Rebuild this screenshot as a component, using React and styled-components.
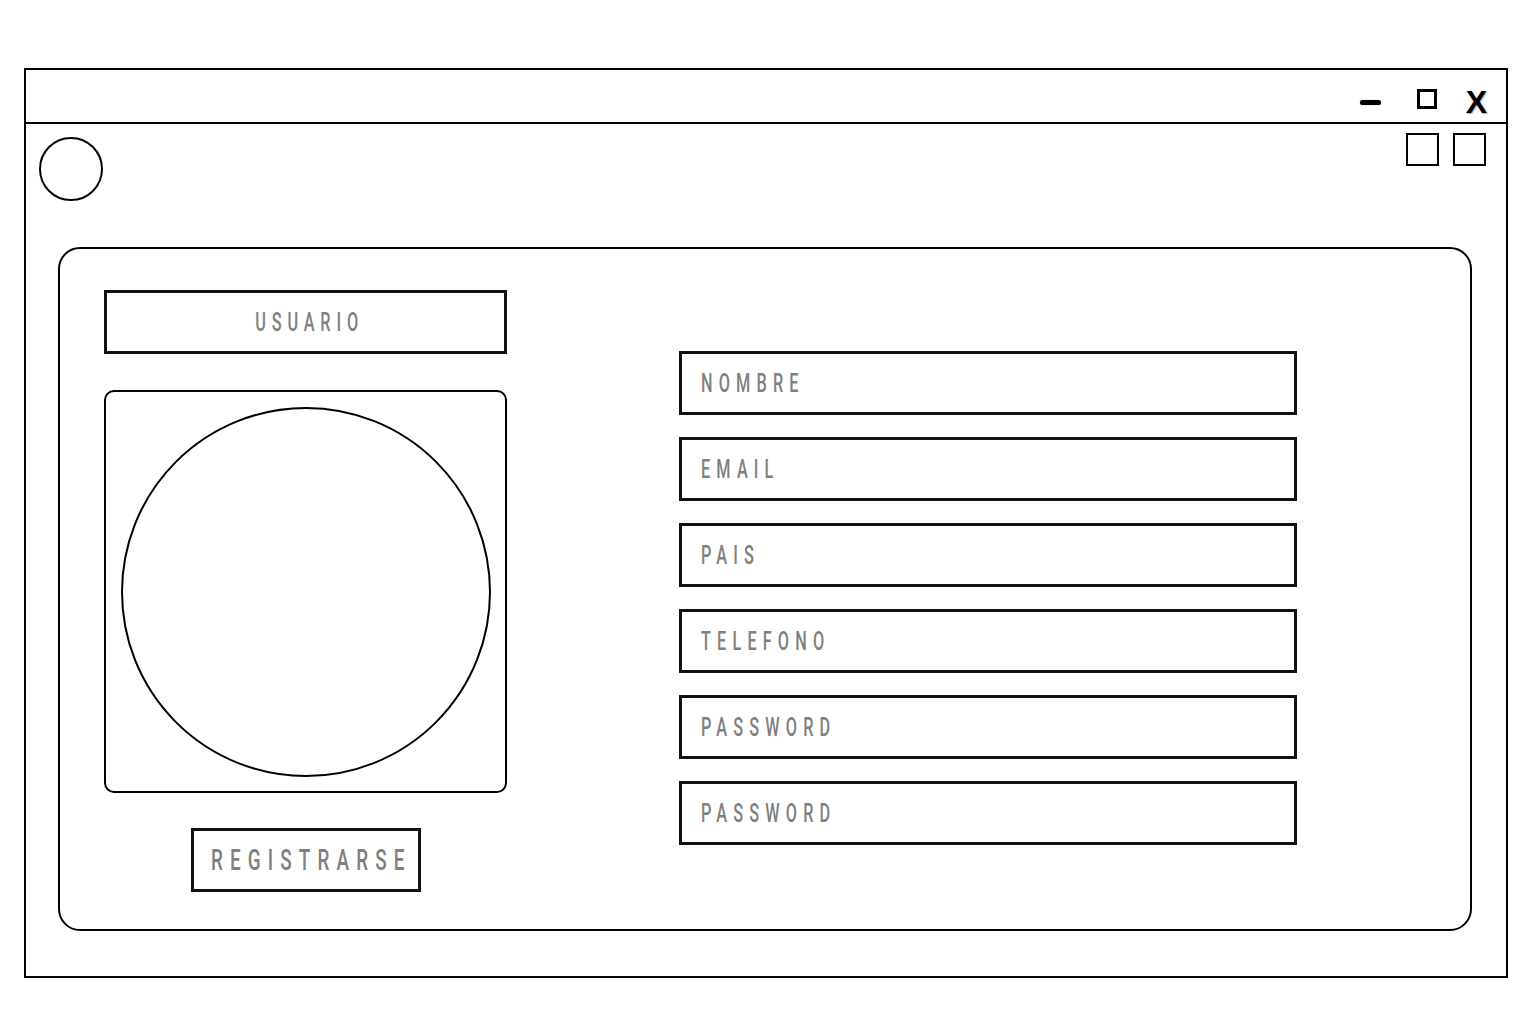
import React from "react";
import styled, { createGlobalStyle } from "styled-components";

const Global = createGlobalStyle`
  html, body { margin: 0; padding: 0; background: #fff; }
  body { font-family: Roboto, "DejaVu Sans", sans-serif; }
`;

const Page = styled.div`
  width: 1524px;
  height: 1031px;
  padding: 68px 0 0 24px;
  box-sizing: border-box;
`;

const Window = styled.div`
  width: 1484px;
  height: 910px;
  border: 2px solid #000;
  box-sizing: border-box;
  display: flex;
  flex-direction: column;
`;

const TitleBar = styled.div`
  height: 54px;
  box-sizing: border-box;
  border-bottom: 2px solid #000;
  display: flex;
  justify-content: flex-end;
  align-items: center;
  padding: 6px 19px 0 0;
`;

const Minus = styled.div`
  width: 21px;
  height: 5px;
  border-radius: 2.5px;
  background: #000;
  margin-top: 6px;
  box-shadow: 0 0 1px rgba(0,0,0,0.6);
`;

const MaxBox = styled.div`
  width: 20px;
  height: 20px;
  box-sizing: border-box;
  border: 3px solid #000;
  margin-left: 36px;
`;

const CloseX = styled.div`
  font-family: "Liberation Sans", Arial, sans-serif;
  font-weight: 700;
  font-size: 32px;
  line-height: 32px;
  color: #000;
  margin-left: 29px;
  margin-top: 5px;
  text-shadow: 1px 1px 1px rgba(0,0,0,0.35);
`;

const Header = styled.div`
  height: 123px;
  display: flex;
  justify-content: space-between;
  align-items: flex-start;
  padding: 0 20px 0 13px;
`;

const Avatar = styled.div`
  width: 64px;
  height: 64px;
  box-sizing: border-box;
  border: 2px solid #000;
  border-radius: 50%;
  margin-top: 13px;
`;

const SquareGroup = styled.div`
  display: flex;
  gap: 14px;
  margin-top: 9px;
`;

const SmallSquare = styled.div`
  width: 33px;
  height: 33px;
  box-sizing: border-box;
  border: 2px solid #000;
`;

const Panel = styled.div`
  margin: 0 34px 0 32px;
  height: 684px;
  box-sizing: border-box;
  border: 2px solid #000;
  border-radius: 22px;
  display: flex;
  gap: 172px;
  padding: 41px 0 0 44px;
`;

const LeftCol = styled.div`
  width: 403px;
  display: flex;
  flex-direction: column;
  align-items: center;
`;

const RightCol = styled.div`
  width: 618px;
  margin-top: 61px;
  display: flex;
  flex-direction: column;
  gap: 22px;
`;

/* condensed DIN-like lettering: Roboto squeezed horizontally */
const Label = styled.span`
  display: inline-block;
  font-family: Roboto, "DejaVu Sans", sans-serif;
  font-weight: 500;
  color: #808080;
  font-size: ${(p) => p.$size || 25}px;
  line-height: 1;
  letter-spacing: ${(p) => p.$spacing || 9.5}px;
  margin-right: ${(p) => (p.$center ? -(p.$spacing || 9.5) : 0)}px;
  margin-top: 1px;
  white-space: nowrap;
  transform: scaleX(0.65);
  transform-origin: ${(p) => (p.$center ? "center" : "left")} center;
`;

const Box = styled.div`
  width: ${(p) => p.$w}px;
  height: 64px;
  box-sizing: border-box;
  border: 3px solid #111;
  display: flex;
  align-items: center;
  justify-content: ${(p) => (p.$left ? "flex-start" : "center")};
  padding: ${(p) => (p.$left ? "0 0 0 19px" : "0")};
`;

const PhotoFrame = styled.div`
  width: 403px;
  height: 403px;
  box-sizing: border-box;
  border: 2px solid #000;
  border-radius: 10px;
  margin-top: 36px;
  display: flex;
  align-items: center;
  justify-content: center;
`;

const PhotoCircle = styled.div`
  width: 370px;
  height: 370px;
  box-sizing: border-box;
  border: 2px solid #000;
  border-radius: 50%;
`;

const Button = styled(Box)`
  margin-top: 35px;
`;

const fields = ["NOMBRE", "EMAIL", "PAIS", "TELEFONO", "PASSWORD", "PASSWORD"];

export default function App() {
  return (
    <>
      <Global />
      <Page>
        <Window>
          <TitleBar>
            <Minus />
            <MaxBox />
            <CloseX>X</CloseX>
          </TitleBar>
          <Header>
            <Avatar />
            <SquareGroup>
              <SmallSquare />
              <SmallSquare />
            </SquareGroup>
          </Header>
          <Panel>
            <LeftCol>
              <Box $w={403}>
                <Label $center $spacing={9}>USUARIO</Label>
              </Box>
              <PhotoFrame>
                <PhotoCircle />
              </PhotoFrame>
              <Button $w={230}>
                <Label $center $size={29} $spacing={11}>REGISTRARSE</Label>
              </Button>
            </LeftCol>
            <RightCol>
              {fields.map((f, i) => (
                <Box key={i} $w={618} $left>
                  <Label>{f}</Label>
                </Box>
              ))}
            </RightCol>
          </Panel>
        </Window>
      </Page>
    </>
  );
}
